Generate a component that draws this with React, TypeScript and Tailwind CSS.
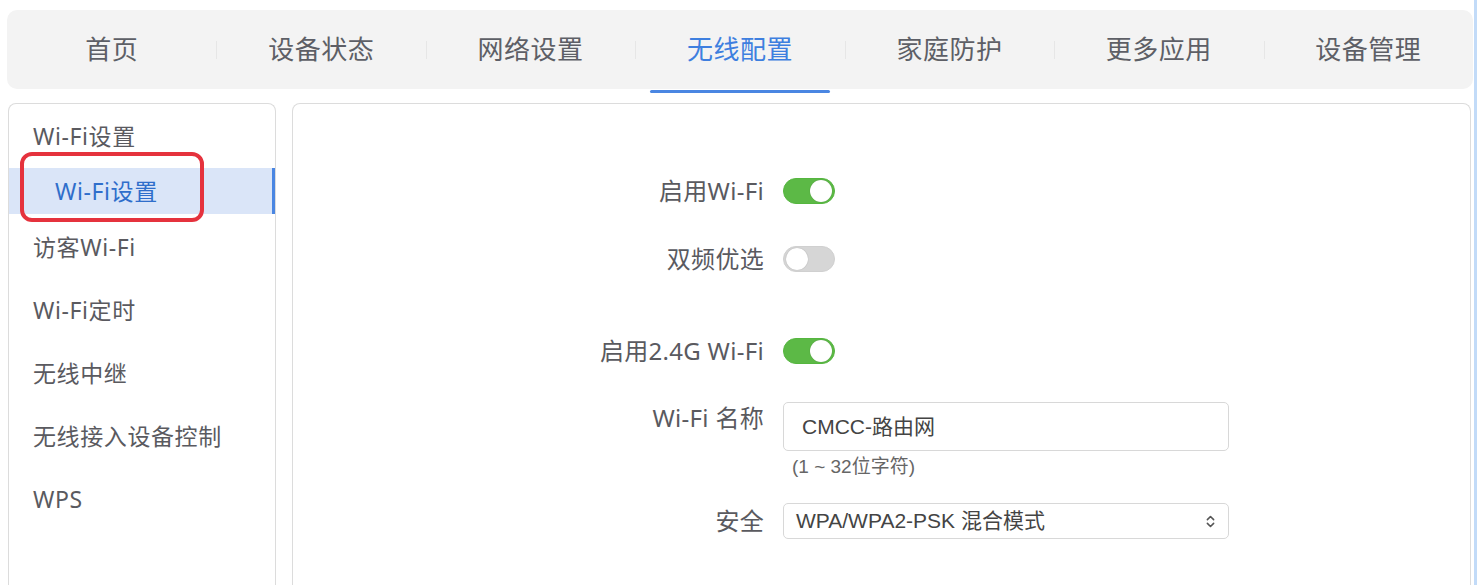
import { ChevronsUpDown } from 'lucide-react';

const TABS = ['首页', '设备状态', '网络设置', '无线配置', '家庭防护', '更多应用', '设备管理'];
const ACTIVE_TAB = 3;

const SIDE_ITEMS = ['访客Wi-Fi', 'Wi-Fi定时', '无线中继', '无线接入设备控制', 'WPS'];

const fieldFont = { fontFamily: '"Liberation Sans", "Noto Sans CJK SC", sans-serif' };

function Toggle({ on }: { on: boolean }) {
  return (
    <div
      className={`flex h-[26px] w-[52px] items-center rounded-full border px-[2px] ${
        on ? 'justify-end border-[#55b63f] bg-[#5cb946]' : 'justify-start border-[#d0d0d0] bg-[#d6d6d6]'
      }`}
    >
      <div className="h-[22px] w-[22px] rounded-full bg-white shadow-[0_0_1px_rgba(0,0,0,0.3)]" />
    </div>
  );
}

function Row({ label, children, className = '' }: { label: string; children: React.ReactNode; className?: string }) {
  return (
    <div className={`flex items-center gap-[19px] ${className}`}>
      <div className="w-[471px] text-right text-[24px] leading-[32px] tracking-[0.3px] text-[#5a5a5f]">{label}</div>
      {children}
    </div>
  );
}

export default function App() {
  return (
    <div
      className="flex h-[585px] w-full overflow-hidden bg-white"
      style={{ fontFamily: '"Noto Sans", "Noto Sans CJK SC", sans-serif' }}
    >
      <div className="flex min-w-0 flex-1 flex-col pt-[10px]">
        {/* top nav */}
        <div className="ml-[7px] mr-[1px] flex h-[79px] rounded-[10px] bg-[#f3f3f3]">
          {TABS.map((t, i) => (
            <div key={t} className="relative flex flex-1 items-center justify-center">
              <span className={`text-[26px] tracking-[0.5px] ${i === ACTIVE_TAB ? 'text-[#3e7fdf]' : 'text-[#5d5f66]'}`}>{t}</span>
              {i > 0 && <div className="absolute left-0 top-[31px] h-[18px] w-px bg-[#e6e6e6]" />}
              {i === ACTIVE_TAB && (
                <div className="absolute -bottom-[4px] left-1/2 h-[3px] w-[180px] -translate-x-1/2 rounded-full bg-[#4a86e2]" />
              )}
            </div>
          ))}
        </div>

        <div className="mt-[14px] flex min-h-0 flex-1 gap-[16px] pl-[8px] pr-[3px]">
          {/* sidebar */}
          <div className="w-[268px] shrink-0 rounded-t-[8px] border border-b-0 border-[#dcdcdc] pt-[9px] text-[23px] tracking-[0.6px] text-[#5a5a5f]">
            <div className="flex h-[46px] items-center pl-[24px]">Wi-Fi设置</div>
            <div className="relative mt-[9px] flex h-[46px] items-center border-r-[3px] border-[#4a86e2] bg-[#dae5f8] pl-[46px] text-[#2f6ecb]">
              Wi-Fi设置
              <div className="absolute left-[11px] top-[-16px] h-[70px] w-[184px] rounded-[12px] border-[4px] border-[#e5323d]" />
            </div>
            <div className="mt-[2px]">
              {SIDE_ITEMS.map((s) => (
                <div key={s} className="flex h-[63px] items-center pl-[24px]">
                  {s}
                </div>
              ))}
            </div>
          </div>

          {/* main panel */}
          <div className="min-w-0 flex-1 rounded-t-[8px] border border-b-0 border-[#dcdcdc] pt-[71px]">
            <Row label="启用Wi-Fi">
              <Toggle on />
            </Row>
            <Row label="双频优选" className="mt-[36px]">
              <Toggle on={false} />
            </Row>
            <Row label="启用2.4G Wi-Fi" className="mt-[60px]">
              <Toggle on />
            </Row>
            <div className="mt-[35px] flex items-start gap-[19px]">
              <div className="w-[471px] text-right text-[24px] leading-[32px] tracking-[0.3px] text-[#5a5a5f]">Wi-Fi 名称</div>
              <div className="flex flex-col">
                <div
                  className="flex h-[49px] w-[446px] items-center rounded-[5px] border border-[#d8d8d8] pl-[18px] text-[21px] text-[#444]"
                  style={fieldFont}
                >
                  CMCC-路由网
                </div>
                <div className="mt-[5px] pl-[9px] text-[19px] leading-[22px] text-[#666]" style={fieldFont}>
                  (1 ~ 32位字符)
                </div>
              </div>
            </div>
            <Row label="安全" className="mt-[25px]">
              <div
                className="flex h-[36px] w-[446px] items-center justify-between rounded-[5px] border border-[#d8d8d8] pl-[12px] pr-[10px] text-[21px] text-[#444]"
                style={fieldFont}
              >
                <span>WPA/WPA2-PSK 混合模式</span>
                <ChevronsUpDown className="h-[15px] w-[15px] text-[#555]" strokeWidth={2.5} />
              </div>
            </Row>
          </div>
        </div>
      </div>
      <div className="w-[3px] shrink-0 bg-[#c2dbf8]" />
    </div>
  );
}
